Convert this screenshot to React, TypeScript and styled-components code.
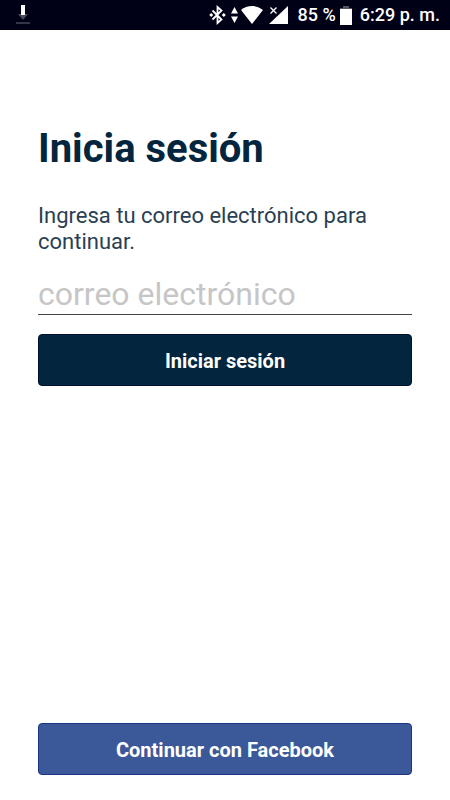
import React from 'react';
import styled, { createGlobalStyle } from 'styled-components';

const GlobalStyle = createGlobalStyle`
  *, *::before, *::after { box-sizing: border-box; }
  body {
    margin: 0;
    background: #ffffff;
    color: #04253e;
    font-family: Roboto, "Liberation Sans", sans-serif;
  }
`;

const Screen = styled.div`
  display: flex;
  flex-direction: column;
  min-height: 100vh;
`;

const StatusBar = styled.header`
  display: flex;
  align-items: center;
  justify-content: space-between;
  height: 30px;
  padding: 0 10px 0 16px;
  background: #000017;
  color: #ffffff;
  font-size: 18px;
  font-weight: 500;
  line-height: 32px;
  white-space: nowrap;

  svg { display: block; flex: none; }
`;

const StatusGroup = styled.div<{ $gap: number }>`
  display: flex;
  align-items: center;
  gap: ${({ $gap }) => $gap}px;
`;

const Main = styled.main`
  display: flex;
  flex: 1;
  flex-direction: column;
  padding: 95px 38px 25px;
`;

const Title = styled.h1`
  margin: 0 0 30px;
  font-size: 40px;
  font-weight: 700;
  line-height: 48px;
`;

const LoginForm = styled.form`
  display: flex;
  flex-direction: column;
`;

const Prompt = styled.label`
  color: #2a3f52;
  font-size: 22px;
  line-height: 26px;
`;

const EmailInput = styled.input`
  width: 100%;
  height: 44px;
  margin: 16px 0 19px;
  padding: 2px 0 0;
  border: 0;
  border-bottom: 1px solid #45454a;
  border-radius: 0;
  outline: 0;
  background: transparent;
  color: #04253e;
  font-family: inherit;
  font-size: 32px;
  line-height: 38px;

  &::placeholder { color: #c6c6c6; opacity: 1; }
`;

const Button = styled.button<{ $tone: 'navy' | 'facebook' }>`
  width: 100%;
  height: 52px;
  padding: 2px 16px 0;
  border: 1px solid ${({ $tone }) => ($tone === 'navy' ? '#00132b' : '#1c3485')};
  border-radius: 4px;
  background: ${({ $tone }) => ($tone === 'navy' ? '#04253e' : '#3b5998')};
  color: #ffffff;
  font-family: inherit;
  font-size: 20px;
  font-weight: 700;
  line-height: 24px;
  cursor: pointer;
`;

const Footer = styled.footer`
  margin-top: auto;
`;

const DownloadIcon = () => (
  <svg width="14" height="20" viewBox="0 0 14 20" aria-hidden="true">
    <path d="M2 9h10l-5 6z" fill="#494957" />
    <path d="M5 0h4v10H5z" fill="#ffffff" />
    <path d="M0 17h14v2H0z" fill="#35354a" />
  </svg>
);

const BluetoothIcon = () => (
  <svg width="17" height="20" viewBox="0 0 17 20" aria-hidden="true">
    <path d="M3.5 5.5l9 9L8.5 18V2l4 3.5-9 9" fill="none" stroke="#ffffff" strokeWidth="1.8" />
    <path d="M2.2 8L4.2 10l-2 2-2-2zM14.8 8l2 2-2 2-2-2z" fill="#ffffff" />
  </svg>
);

const TrafficIcon = () => (
  <svg width="7" height="16" viewBox="0 0 7 16" aria-hidden="true">
    <path d="M3.5 0L7 6.5H0zM0 9.500h7L3.5 16z" fill="#ffffff" />
  </svg>
);

const WifiIcon = () => (
  <svg width="22" height="18" viewBox="0 0 22 18" aria-hidden="true">
    <path d="M0 4C6-1.3 16-1.3 22 4L11 18z" fill="#ffffff" />
  </svg>
);

const SignalIcon = () => (
  <svg width="19" height="18" viewBox="0 0 19 18" aria-hidden="true">
    <path d="M19 0v18H0z" fill="#ffffff" />
    <path d="M1.5 1.5l6 6m0-6l-6 6" fill="none" stroke="#ffffff" strokeWidth="1.3" />
  </svg>
);

const BatteryIcon = () => (
  <svg width="12" height="19" viewBox="0 0 12 19" aria-hidden="true">
    <path d="M3 0h6v2h3v2H0V2h3z" fill="#55555f" />
    <path d="M0 3h12v16H0z" fill="#ffffff" />
  </svg>
);

export default function App() {
  return (
    <>
      <GlobalStyle />
      <Screen>
        <StatusBar>
          <DownloadIcon />
          <StatusGroup $gap={4}>
            <StatusGroup $gap={10}>
              <StatusGroup $gap={6}>
                <StatusGroup $gap={3}>
                  <StatusGroup $gap={5}>
                    <BluetoothIcon />
                    <TrafficIcon />
                  </StatusGroup>
                  <WifiIcon />
                </StatusGroup>
                <SignalIcon />
              </StatusGroup>
              <span>85 %</span>
            </StatusGroup>
            <StatusGroup $gap={8}>
              <BatteryIcon />
              <span>6:29 p. m.</span>
            </StatusGroup>
          </StatusGroup>
        </StatusBar>
        <Main>
          <Title>Inicia sesión</Title>
          <LoginForm onSubmit={(event) => event.preventDefault()}>
            <Prompt htmlFor="email">Ingresa tu correo electrónico para continuar.</Prompt>
            <EmailInput id="email" type="email" placeholder="correo electrónico" />
            <Button type="submit" $tone="navy">Iniciar sesión</Button>
          </LoginForm>
          <Footer>
            <Button type="button" $tone="facebook">Continuar con Facebook</Button>
          </Footer>
        </Main>
      </Screen>
    </>
  );
}
